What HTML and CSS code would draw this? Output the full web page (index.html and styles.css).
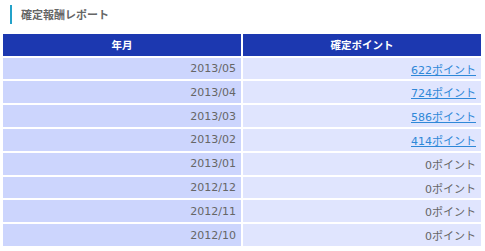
FILE: index.html
```html
<!DOCTYPE html>
<html lang="ja">
<head>
<meta charset="utf-8">
<link rel="stylesheet" href="styles.css">
</head>
<body>
<div class="page">
  <h2 class="title">確定報酬レポート</h2>
  <table class="report">
    <thead>
      <tr><th>年月</th><th>確定ポイント</th></tr>
    </thead>
    <tbody>
      <tr><td class="ym">2013/05</td><td class="pt"><a href="#">622ポイント</a></td></tr>
      <tr><td class="ym">2013/04</td><td class="pt"><a href="#">724ポイント</a></td></tr>
      <tr><td class="ym">2013/03</td><td class="pt"><a href="#">586ポイント</a></td></tr>
      <tr><td class="ym">2013/02</td><td class="pt"><a href="#">414ポイント</a></td></tr>
      <tr><td class="ym">2013/01</td><td class="pt">0ポイント</td></tr>
      <tr><td class="ym">2012/12</td><td class="pt">0ポイント</td></tr>
      <tr><td class="ym">2012/11</td><td class="pt">0ポイント</td></tr>
      <tr><td class="ym">2012/10</td><td class="pt">0ポイント</td></tr>
    </tbody>
  </table>
</div>
</body>
</html>
```
FILE: styles.css
```css
html, body {
  margin: 0;
  padding: 0;
  background: #fff;
}
.page {
  padding: 5px 1px 0 1px;
  font-family: "DejaVu Sans", "Noto Sans CJK JP", sans-serif;
  color: #666;
}
.title {
  margin: 0 0 8px 9px;
  padding-left: 9px;
  border-left: 2px solid #23a2c9;
  height: 19px;
  line-height: 19px;
  font-size: 11px;
  font-weight: bold;
  color: #666;
  font-family: "Noto Sans CJK JP", sans-serif;
}
.report {
  width: 482px;
  border-collapse: separate;
  border-spacing: 2px;
  table-layout: fixed;
  font-size: 11px;
}
.report th {
  background: #1c38b0;
  color: #fff;
  font-weight: bold;
  height: 21.7px;
  padding: 0;
  font-size: 10.5px;
  font-family: "Noto Sans CJK JP", sans-serif;
  text-align: center;
}
.report td {
  height: 21.8px;
  padding: 0 5px;
  text-align: right;
  vertical-align: middle;
}
.report td.ym {
  background: #ccd5fd;
}
.report td.pt {
  background: #e0e5fe;
}
.report a {
  color: #2f88d8;
  text-decoration: underline;
}
```
